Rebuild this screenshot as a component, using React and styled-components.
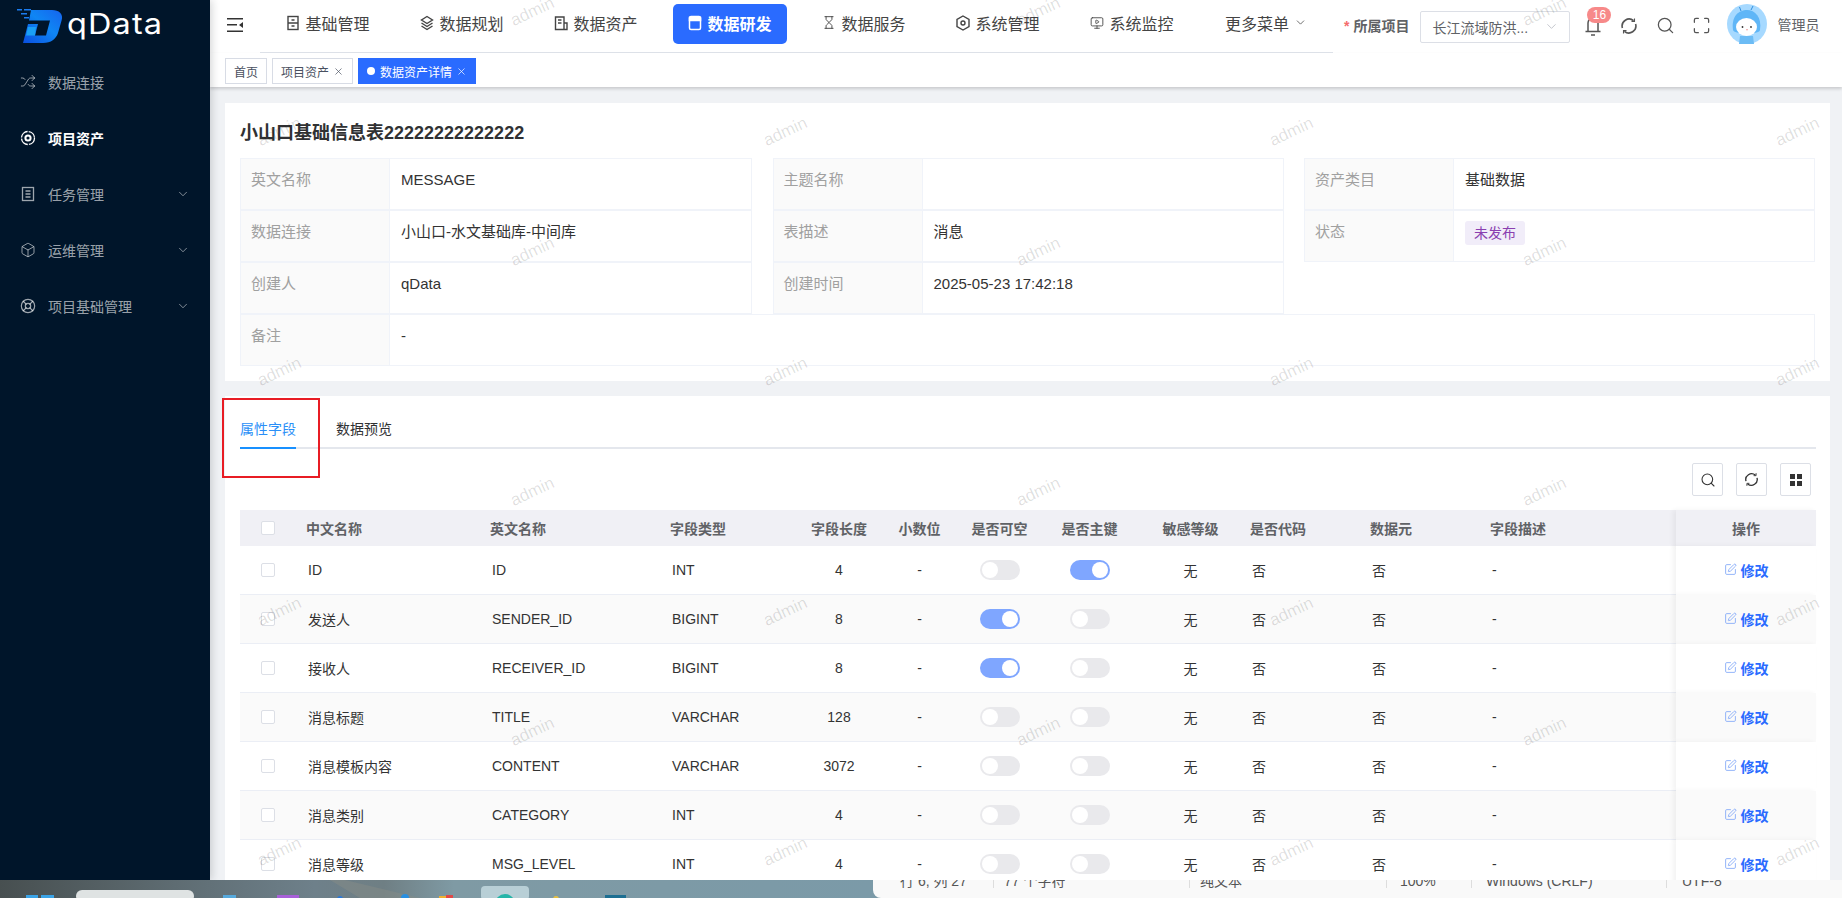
import React from 'react';
import styled, { createGlobalStyle } from 'styled-components';
import { Shuffle, Box, LifeBuoy, ChevronDown, Hourglass, MonitorPlay, Search, Maximize, SquarePen, X } from 'lucide-react';

const GlobalStyle = createGlobalStyle`
  html, body { margin: 0; padding: 0; background: #7b9aa8; }
  body {
    font-family: "Liberation Sans", "Noto Sans CJK SC", sans-serif;
    font-size: 14px;
    color: #333;
    overflow: hidden;
  }
  * { box-sizing: border-box; }
`;

/* columns of the field table, left to right */
const COLUMNS = '56px 184px 180px 140px 78px 83px 77px 103px 99px 120px 120px 196px 140px';

const Page = styled.div`
  width: 1842px;
  height: 898px;
  display: flex;
  flex-direction: column;
  overflow: hidden;
`;

const Screen = styled.div`
  height: 880px;
  flex: none;
  display: flex;
  overflow: hidden;
`;

const Sidebar = styled.aside`
  width: 210px;
  flex: none;
  background: #00152a;
  box-shadow: 2px 0 8px rgba(29, 35, 41, 0.18);
  z-index: 3;
`;

const LogoRow = styled.div`
  height: 54px;
  padding: 8px 0 0 15px;
  display: flex;
  align-items: flex-start;
`;

const LogoText = styled.span`
  margin: -2px 0 0 2px;
  font-family: Inter, sans-serif;
  font-size: 29px;
  line-height: 36px;
  letter-spacing: 1px;
  color: #fff;
  transform: scaleX(1.12);
  transform-origin: left center;
`;

const SideItem = styled.div`
  height: 56px;
  padding: 0 20px 0 20px;
  display: flex;
  align-items: center;
  color: ${(p) => (p.$active ? '#fff' : 'rgba(255,255,255,0.62)')};
  font-weight: ${(p) => (p.$active ? 700 : 400)};
`;

const SideLabel = styled.span`
  margin-left: 12px;
  flex: 1;
`;

const Main = styled.main`
  flex: 1;
  min-width: 0;
  position: relative;
  display: flex;
  flex-direction: column;
  overflow: hidden;
  background: #f0f2f5;
`;

const Header = styled.header`
  height: 53px;
  flex: none;
  display: flex;
  align-items: center;
  padding-left: 17px;
  background: #fff;
  box-shadow: 0 1px 4px rgba(0, 21, 41, 0.06);
  z-index: 1;
`;

const Burger = styled.div`
  width: 16px;
  height: 14px;
  margin-top: -3px;
  flex: none;
  display: flex;
`;

const Nav = styled.nav`
  margin-left: 17px;
  padding-left: 1px;
  height: 53px;
  width: 1073px;
  flex: none;
  display: flex;
  align-self: flex-start;
  border-bottom: 1px solid #dfe3ea;
`;

const NavItem = styled.div`
  width: 134px;
  height: 52px;
  padding: 4px 10px 0;
`;

const NavInner = styled.div`
  height: 40px;
  padding-bottom: 3px;
  display: flex;
  align-items: center;
  justify-content: center;
  gap: 5px;
  border-radius: 5px;
  font-size: 16px;
  background: ${(p) => (p.$active ? '#2a6bff' : 'transparent')};
  color: ${(p) => (p.$active ? '#fff' : '#444')};
  font-weight: ${(p) => (p.$active ? 700 : 400)};
`;

const NavIcon = styled.span`
  width: 14px;
  flex: none;
  display: flex;
  justify-content: center;
`;

const ProjectLabel = styled.span`
  margin: -4px 0 0 11px;
  font-weight: 700;
  color: #606266;
  white-space: nowrap;
  &::before {
    content: '*';
    color: #f56c6c;
    margin-right: 4px;
  }
`;

const Select = styled.div`
  width: 150px;
  height: 32px;
  margin-left: 11px;
  padding: 0 10px 0 11px;
  flex: none;
  display: flex;
  align-items: center;
  justify-content: space-between;
  border: 1px solid #dcdfe6;
  border-radius: 2px;
  color: #606266;
  background: #fff;
`;

const IconSlot = styled.div`
  width: 36px;
  height: 20px;
  position: relative;
  flex: none;
  display: flex;
  align-items: center;
  justify-content: center;
  color: #555;
`;

const Icons = styled.div`
  margin: -2px 8px 0 5px;
  flex: none;
  display: flex;
`;

const Badge = styled.span`
  position: absolute;
  left: 12px;
  top: -9px;
  width: 24px;
  height: 16px;
  border-radius: 8px;
  background: #f78989;
  color: #fff;
  font-size: 12px;
  line-height: 16px;
  text-align: center;
`;

const UserName = styled.span`
  margin: -5px 0 0 10px;
  color: #606266;
  white-space: nowrap;
`;

const TagBar = styled.div`
  height: 34px;
  flex: none;
  padding: 5px 0 0 15px;
  display: flex;
  gap: 5px;
  background: #fff;
  box-shadow: 0 2px 3px rgba(0, 0, 0, 0.16);
  z-index: 1;
`;

const Tag = styled.div`
  height: 26px;
  padding: 0 8px;
  display: flex;
  align-items: center;
  gap: 4px;
  font-size: 12px;
  border: 1px solid ${(p) => (p.$active ? '#2a6bff' : '#d8dce5')};
  background: ${(p) => (p.$active ? '#2a6bff' : '#fff')};
  color: ${(p) => (p.$active ? '#fff' : '#495060')};
`;

const TagDot = styled.i`
  width: 8px;
  height: 8px;
  margin-right: 1px;
  border-radius: 50%;
  background: #fff;
`;

const Content = styled.div`
  flex: 1;
  min-height: 0;
  padding: 16px 12px 0 15px;
  display: flex;
  flex-direction: column;
  gap: 15px;
`;

const InfoCard = styled.section`
  height: 278px;
  flex: none;
  padding: 0 15px;
  background: #fff;
`;

const Title = styled.h1`
  height: 55px;
  margin: 0;
  display: flex;
  align-items: center;
  font-size: 18px;
  font-weight: 700;
  color: #303133;
`;

const DescGrid = styled.div`
  width: 1575px;
  display: grid;
  grid-template-columns: 512px 511px 511px;
  column-gap: 20.5px;
  align-items: start;
`;

const DescRow = styled.div`
  height: 52px;
  display: flex;
  font-size: 15px;
  border: 1px solid #f0f3f9;
  grid-column: ${(p) => (p.$wide ? '1 / -1' : 'auto')};
`;

const DescLabel = styled.div`
  width: 149px;
  flex: none;
  padding: 10px 10px 0;
  line-height: 21px;
  color: #a0a0a0;
  background: #fafafa;
  border-right: 1px solid #f0f3f9;
`;

const DescValue = styled.div`
  flex: 1;
  padding: 10px 11px 0;
  line-height: 21px;
  color: #333;
`;

const Status = styled.span`
  display: inline-block;
  height: 24px;
  padding: 0 9px;
  border-radius: 3px;
  font-size: 14px;
  line-height: 24px;
  color: #8a3fb0;
  background: #f1edf9;
`;

const FieldCard = styled.section`
  flex: 1;
  min-height: 0;
  position: relative;
  padding: 16px 14px 0 15px;
  background: #fff;
`;

const RedMark = styled.div`
  position: absolute;
  left: -3px;
  top: 2px;
  width: 98px;
  height: 80px;
  border: 2px solid #e81c24;
`;

const TabBar = styled.div`
  display: flex;
  gap: 40px;
  border-bottom: 2px solid #e4e7ed;
`;

const Tab = styled.div`
  height: 37px;
  line-height: 34px;
  margin-bottom: -2px;
  color: ${(p) => (p.$active ? '#2a8ff7' : '#303133')};
  border-bottom: 2px solid ${(p) => (p.$active ? '#1890ff' : 'transparent')};
`;

const Toolbar = styled.div`
  height: 61px;
  padding: 14px 5px 14px 0;
  display: flex;
  justify-content: flex-end;
  gap: 13px;
`;

const ToolButton = styled.div`
  width: 31px;
  height: 33px;
  display: flex;
  align-items: center;
  justify-content: center;
  border: 1px solid #dcdfe6;
  border-radius: 2px;
  color: #333;
`;

const Row = styled.div`
  height: ${(p) => (p.$head ? 36 : 49)}px;
  display: grid;
  grid-template-columns: ${COLUMNS};
  align-items: stretch;
  background: ${(p) => (p.$head ? '#f0f0f5' : p.$stripe ? '#fafafa' : '#fff')};
  border-bottom: ${(p) => (p.$head ? 'none' : '1px solid #ebeef5')};
  color: ${(p) => (p.$head ? '#606266' : '#333')};
  font-weight: ${(p) => (p.$head ? 700 : 400)};
`;

const Cell = styled.div`
  display: flex;
  align-items: center;
  justify-content: ${(p) => (p.$center ? 'center' : 'flex-start')};
  padding-left: ${(p) => (p.$center ? 0 : p.$head ? 10 : 12)}px;
  padding-bottom: ${(p) => (p.$head || p.$center ? 1 : 0)}px;
  white-space: nowrap;
`;

const OpCell = styled(Cell)`
  justify-content: center;
  padding-left: 0;
  padding-bottom: 2px;
  gap: 4px;
  position: relative;
  background: inherit;
  box-shadow: -3px 0 5px rgba(0, 0, 0, 0.05);
  color: ${(p) => (p.$head ? '#606266' : '#2a6bff')};
  font-weight: 700;
  margin-bottom: -1px;
  & svg { color: #7aa2f7; }
`;

const Check = styled.i`
  width: 14px;
  height: 14px;
  display: block;
  border: 1px solid #dcdfe6;
  border-radius: 2px;
  background: #fff;
`;

const SwitchTrack = styled.i`
  width: 40px;
  height: 20px;
  padding: 2px;
  display: flex;
  justify-content: ${(p) => (p.$on ? 'flex-end' : 'flex-start')};
  border-radius: 10px;
  background: ${(p) => (p.$on ? '#7fa6ff' : '#e9e9ec')};
  &::after {
    content: '';
    width: 16px;
    height: 16px;
    border-radius: 50%;
    background: #fff;
  }
`;

const Watermarks = styled.div`
  position: absolute;
  left: -57px;
  top: -48px;
  display: grid;
  grid-template-columns: repeat(7, 253px);
  grid-auto-rows: 120px;
  pointer-events: none;
  z-index: 2;
`;

const Mark = styled.span`
  display: flex;
  align-items: center;
  justify-content: center;
  font-size: 17px;
  color: rgba(0, 0, 0, 0.13);
  transform: rotate(-25deg);
`;

const TaskStrip = styled.div`
  height: 18px;
  flex: none;
  display: flex;
  overflow: hidden;
  background: #7b9aa8;
`;

const NotepadBar = styled.div`
  flex: 1;
  display: flex;
  background: #f9f9f9;
  border-bottom-left-radius: 8px;
  overflow: hidden;
`;

const NotepadCell = styled.div`
  width: ${(p) => p.$w}px;
  height: 16px;
  margin-top: -8px;
  padding-left: ${(p) => p.$pad}px;
  flex: none;
  line-height: 18px;
  color: #555;
  border-left: ${(p) => (p.$first ? 'none' : '1px solid #ddd')};
`;

const navItems = [
  { label: '基础管理', icon: <BaseIcon /> },
  { label: '数据规划', icon: <LayersIcon /> },
  { label: '数据资产', icon: <AssetIcon /> },
  { label: '数据研发', icon: <DevIcon />, active: true },
  { label: '数据服务', icon: <Hourglass size={15} strokeWidth={1.6} /> },
  { label: '系统管理', icon: <HexIcon /> },
  { label: '系统监控', icon: <MonitorPlay size={16} strokeWidth={1.5} /> },
];

const sideItems = [
  { label: '数据连接', icon: <Shuffle size={16} strokeWidth={1.4} /> },
  { label: '项目资产', icon: <AssetRing />, active: true },
  { label: '任务管理', icon: <TaskIcon />, more: true },
  { label: '运维管理', icon: <Box size={16} strokeWidth={1.4} />, more: true },
  { label: '项目基础管理', icon: <LifeBuoy size={16} strokeWidth={1.8} />, more: true },
];

const fields = [
  ['ID', 'ID', 'INT', '4', false, true],
  ['发送人', 'SENDER_ID', 'BIGINT', '8', true, false],
  ['接收人', 'RECEIVER_ID', 'BIGINT', '8', true, false],
  ['消息标题', 'TITLE', 'VARCHAR', '128', false, false],
  ['消息模板内容', 'CONTENT', 'VARCHAR', '3072', false, false],
  ['消息类别', 'CATEGORY', 'INT', '4', false, false],
  ['消息等级', 'MSG_LEVEL', 'INT', '4', false, false],
];

const statusCells = [
  { text: '行 6, 列 27', w: 120, pad: 27, first: true },
  { text: '77 个字符', w: 196, pad: 10 },
  { text: '纯文本', w: 197, pad: 10 },
  { text: '100%', w: 85, pad: 13 },
  { text: 'Windows (CRLF)', w: 195, pad: 14 },
  { text: 'UTF-8', w: 176, pad: 15 },
];

function BaseIcon() {
  return (
    <svg width="16" height="16" viewBox="0 0 16 16" fill="none" stroke="currentColor" strokeWidth="1.4" style={{ flex: 'none' }}>
      <rect x="3" y="1.5" width="10" height="13" />
      <path d="M3 8h10M6.5 5h3M6.5 11h3" />
    </svg>
  );
}

function LayersIcon() {
  return (
    <svg width="16" height="16" viewBox="0 0 16 16" fill="none" stroke="currentColor" strokeWidth="1.4" style={{ flex: 'none' }}>
      <path d="M8 1.5 13.5 5 8 8.5 2.5 5zM2.5 8 8 11.5 13.5 8M2.5 11 8 14.5 13.5 11" />
    </svg>
  );
}

function AssetIcon() {
  return (
    <svg width="16" height="16" viewBox="0 0 16 16" fill="none" stroke="currentColor" strokeWidth="1.4" style={{ flex: 'none' }}>
      <path d="M11 14.5H2.500V2H11zM11 8h3v6.500h-3M5 5h3.500M5 8h3.500" />
    </svg>
  );
}

function DevIcon() {
  return (
    <svg width="14" height="16" viewBox="0 0 14 16" fill="none" stroke="currentColor" strokeWidth="1.5" style={{ flex: 'none' }}>
      <rect x="1.500" y="1.500" width="11" height="13" rx="1.500" />
      <path d="M1.500 2.500h11v3h-11z" fill="currentColor" />
    </svg>
  );
}

function HexIcon() {
  return (
    <svg width="16" height="16" viewBox="0 0 16 16" fill="none" stroke="currentColor" strokeWidth="1.4" style={{ flex: 'none' }}>
      <path d="M8 1 14 4.500v7L8 15l-6-3.500v-7z" />
      <circle cx="8" cy="8" r="2" />
    </svg>
  );
}

function AssetRing() {
  return (
    <svg width="16" height="16" viewBox="0 0 16 16" fill="none" stroke="currentColor">
      <circle cx="8" cy="8" r="6.500" strokeWidth="1.300" strokeDasharray="9 1.200" />
      <circle cx="8" cy="8" r="2.600" strokeWidth="2" />
    </svg>
  );
}

function TaskIcon() {
  return (
    <svg width="16" height="16" viewBox="0 0 16 16" fill="none" stroke="currentColor" strokeWidth="1.3">
      <rect x="2.500" y="1.500" width="11" height="13" />
      <path d="M5.500 5h5M5.500 8h5M5.500 11h5" />
    </svg>
  );
}

function BurgerIcon() {
  return (
    <svg width="16" height="14" viewBox="0 0 16 14" fill="#333">
      <path d="M0 0h16v1.600H0zM0 6h10v1.600H0zM0 12.400h16V14H0zM16 4v6l-4-3z" />
    </svg>
  );
}

function BellIcon() {
  return (
    <svg width="20" height="22" viewBox="0 0 20 22" fill="none" stroke="currentColor" strokeWidth="1.5">
      <path d="M5 16V8a5 5 0 0 1 10 0v8M2.500 16.500h15M8 20h4" />
    </svg>
  );
}

function RefreshIcon({ size = 18 }) {
  return (
    <svg width={size} height={size} viewBox="0 0 18 18" fill="none" stroke="currentColor" strokeWidth="1.6">
      <path d="M2.400 11A7 7 0 0 1 13.600 3.700M15.600 7a7 7 0 0 1-11.200 7.300" />
      <path d="M14.500 1.400v3h-3M3.500 16.600v-3h3" strokeWidth="1.100" />
    </svg>
  );
}

function GridIcon() {
  return (
    <svg width="12" height="12" viewBox="0 0 12 12" fill="#333">
      <path d="M0 0h5v5H0zM7 0h5v5H7zM0 7h5v5H0zM7 7h5v5H7z" />
    </svg>
  );
}

function LogoMark() {
  return (
    <svg width="50" height="36" viewBox="0 0 50 36" style={{ flex: 'none' }}>
      <defs>
        <linearGradient id="logoFill" x1="0" y1="1" x2="1" y2="0">
          <stop offset="0" stopColor="#0a4fe0" />
          <stop offset="0.55" stopColor="#0f86f4" />
          <stop offset="1" stopColor="#1664ee" />
        </linearGradient>
      </defs>
      <path
        fill="url(#logoFill)"
        d="M16 2H37C44 2 48.500 6 46.700 12L43 25C41 31 36 35 28 35H8L13 16H23L20 27.500H31L35 12.500H14z"
      />
      <path fill="#1aa0f5" d="M13 19h8l-1 8.500h-9z" />
      <path fill="#1a7cf0" d="M2 1h5v1.500H2zM9 1h7v1.500H9zM6 5h6v1.500H6zM9 9h5v1.500H9z" />
    </svg>
  );
}

function Avatar() {
  return (
    <svg width="40" height="40" viewBox="0 0 40 40" style={{ flex: 'none', marginTop: -5 }}>
      <circle cx="20" cy="20" r="20" fill="#a6d9ff" />
      <path d="M14 7 12.500 3M24 6l2-4" stroke="#2f8fe0" strokeWidth="1" fill="none" />
      <path d="M6 26C4 12 12 6 20 6s15 7 13 20c-1 5-25 5-27 0z" fill="#5fb6f7" />
      <ellipse cx="19.500" cy="23" rx="10.500" ry="9" fill="#fff" />
      <circle cx="15.500" cy="23" r="0.900" fill="#333" />
      <circle cx="24" cy="23" r="0.900" fill="#333" />
      <path d="M19 25.500q1 1 2 0" stroke="#e88" strokeWidth="0.800" fill="none" />
      <path d="M13 32h13l1 8H12z" fill="#6cbcf5" />
    </svg>
  );
}

function Wallpaper() {
  return (
    <svg width="873" height="18" viewBox="0 0 873 18" style={{ flex: 'none' }}>
      <defs>
        <linearGradient id="wallFill">
          <stop offset="0" stopColor="#474f50" />
          <stop offset="0.2" stopColor="#5e6c72" />
          <stop offset="0.36" stopColor="#6e808a" />
          <stop offset="0.44" stopColor="#6f7f84" />
          <stop offset="0.52" stopColor="#7f9aa4" />
          <stop offset="1" stopColor="#7b9aa8" />
        </linearGradient>
      </defs>
      <rect width="873" height="18" fill="url(#wallFill)" />
      <path d="M345 0 420 18H360L330 0z" fill="#8b8f88" opacity="0.4" />
      <rect x="26" y="15" width="12" height="3" fill="#3aa3e6" />
      <rect x="41" y="15" width="13" height="3" fill="#3aa3e6" />
      <rect x="76" y="10" width="118" height="12" rx="6" fill="#dfe3e3" />
      <rect x="223" y="15" width="13" height="3" fill="#56a9dc" />
      <rect x="277" y="15" width="22" height="3" fill="#a860d8" />
      <circle cx="340" cy="19" r="3" fill="#2a78d8" />
      <circle cx="405" cy="18" r="4" fill="#2a8fe0" />
      <rect x="439" y="16" width="7" height="2" fill="#f0b030" />
      <rect x="446" y="15" width="7" height="3" fill="#e04848" />
      <rect x="481" y="6" width="48" height="14" rx="4" fill="#b8cfd6" />
      <circle cx="505" cy="24" r="10" fill="#26b5a8" />
      <circle cx="556" cy="19" r="3" fill="#e6c040" />
      <rect x="605" y="15" width="21" height="3" fill="#1d6f92" />
    </svg>
  );
}

function Desc({ label, children, wide }) {
  return (
    <DescRow $wide={wide}>
      <DescLabel>{label}</DescLabel>
      <DescValue>{children}</DescValue>
    </DescRow>
  );
}

export default function App() {
  const marks = [];
  for (let r = 0; r < 8; r++) {
    for (let c = 0; c < 7; c++) {
      marks.push(<Mark key={`${r}-${c}`}>{(r + c) % 2 === 1 ? 'admin' : ''}</Mark>);
    }
  }

  return (
    <Page>
      <GlobalStyle />
      <Screen>
        <Sidebar>
          <LogoRow>
            <LogoMark />
            <LogoText>qData</LogoText>
          </LogoRow>
          {sideItems.map((item) => (
            <SideItem key={item.label} $active={item.active}>
              {item.icon}
              <SideLabel>{item.label}</SideLabel>
              {item.more && <ChevronDown size={14} strokeWidth={1.4} />}
            </SideItem>
          ))}
        </Sidebar>

        <Main>
          <Header>
            <Burger>
              <BurgerIcon />
            </Burger>
            <Nav>
              {navItems.map((item) => (
                <NavItem key={item.label}>
                  <NavInner $active={item.active}>
                    <NavIcon>{item.icon}</NavIcon>
                    {item.label}
                  </NavInner>
                </NavItem>
              ))}
              <NavItem>
                <NavInner>
                  更多菜单
                  <ChevronDown size={13} strokeWidth={1.4} />
                </NavInner>
              </NavItem>
            </Nav>
            <ProjectLabel>所属项目</ProjectLabel>
            <Select>
              长江流域防洪...
              <ChevronDown size={15} strokeWidth={1.2} color="#b0b4bc" />
            </Select>
            <Icons>
              <IconSlot>
                <BellIcon />
                <Badge>16</Badge>
              </IconSlot>
              <IconSlot>
                <RefreshIcon />
              </IconSlot>
              <IconSlot>
                <Search size={19} strokeWidth={1.6} />
              </IconSlot>
              <IconSlot>
                <Maximize size={19} strokeWidth={1.6} />
              </IconSlot>
            </Icons>
            <Avatar />
            <UserName>管理员</UserName>
          </Header>

          <TagBar>
            <Tag>首页</Tag>
            <Tag>
              项目资产
              <X size={11} strokeWidth={1.5} />
            </Tag>
            <Tag $active>
              <TagDot />
              数据资产详情
              <X size={11} strokeWidth={1.5} />
            </Tag>
          </TagBar>

          <Content>
            <InfoCard>
              <Title>小山口基础信息表22222222222222</Title>
              <DescGrid>
                <div>
                  <Desc label="英文名称">MESSAGE</Desc>
                  <Desc label="数据连接">小山口-水文基础库-中间库</Desc>
                  <Desc label="创建人">qData</Desc>
                </div>
                <div>
                  <Desc label="主题名称" />
                  <Desc label="表描述">消息</Desc>
                  <Desc label="创建时间">2025-05-23 17:42:18</Desc>
                </div>
                <div>
                  <Desc label="资产类目">基础数据</Desc>
                  <Desc label="状态">
                    <Status>未发布</Status>
                  </Desc>
                </div>
                <Desc label="备注" wide>
                  -
                </Desc>
              </DescGrid>
            </InfoCard>

            <FieldCard>
              <RedMark />
              <TabBar>
                <Tab $active>属性字段</Tab>
                <Tab>数据预览</Tab>
              </TabBar>
              <Toolbar>
                <ToolButton>
                  <Search size={16} strokeWidth={1.6} />
                </ToolButton>
                <ToolButton>
                  <RefreshIcon size={15} />
                </ToolButton>
                <ToolButton>
                  <GridIcon />
                </ToolButton>
              </Toolbar>
              <Row $head>
                <Cell $center>
                  <Check />
                </Cell>
                <Cell $head>中文名称</Cell>
                <Cell $head>英文名称</Cell>
                <Cell $head>字段类型</Cell>
                <Cell $center>字段长度</Cell>
                <Cell $center>小数位</Cell>
                <Cell $center>是否可空</Cell>
                <Cell $center>是否主键</Cell>
                <Cell $center>敏感等级</Cell>
                <Cell $head>是否代码</Cell>
                <Cell $head>数据元</Cell>
                <Cell $head>字段描述</Cell>
                <OpCell $head>操作</OpCell>
              </Row>
              {fields.map((f, i) => (
                <Row key={f[1]} $stripe={i % 2 === 1}>
                  <Cell $center>
                    <Check />
                  </Cell>
                  <Cell>{f[0]}</Cell>
                  <Cell>{f[1]}</Cell>
                  <Cell>{f[2]}</Cell>
                  <Cell $center>{f[3]}</Cell>
                  <Cell $center>-</Cell>
                  <Cell $center>
                    <SwitchTrack $on={f[4]} />
                  </Cell>
                  <Cell $center>
                    <SwitchTrack $on={f[5]} />
                  </Cell>
                  <Cell $center>无</Cell>
                  <Cell>否</Cell>
                  <Cell>否</Cell>
                  <Cell>-</Cell>
                  <OpCell>
                    <SquarePen size={13} strokeWidth={1.5} />
                    修改
                  </OpCell>
                </Row>
              ))}
            </FieldCard>
          </Content>

          <Watermarks>{marks}</Watermarks>
        </Main>
      </Screen>

      <TaskStrip>
        <Wallpaper />
        <NotepadBar>
          {statusCells.map((c) => (
            <NotepadCell key={c.text} $w={c.w} $pad={c.pad} $first={c.first}>
              {c.text}
            </NotepadCell>
          ))}
        </NotepadBar>
      </TaskStrip>
    </Page>
  );
}
